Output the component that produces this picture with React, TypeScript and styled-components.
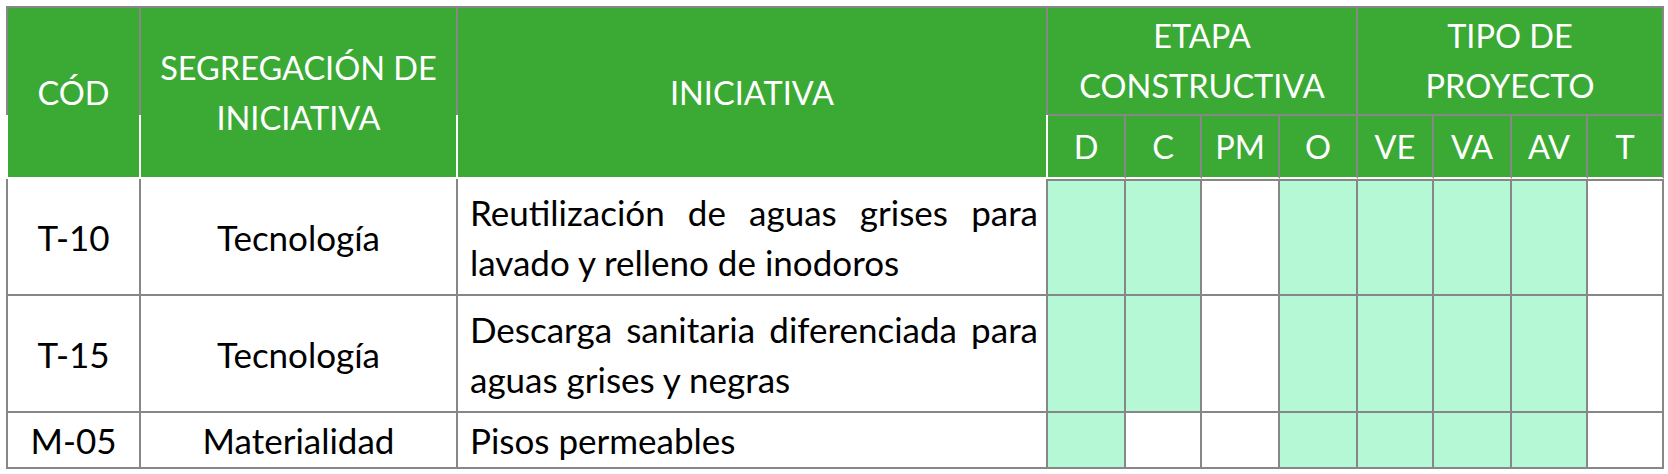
import React from "react";
import styled, { createGlobalStyle, css } from "styled-components";

const GREEN = "#3aaa35";
const FILL = "#b5f8d5";
const LINE = "#878787";

const GlobalStyle = createGlobalStyle`
  html, body { margin: 0; padding: 0; background: #ffffff; }
  body { font-family: Lato, "Liberation Sans", sans-serif; }
`;

const Page = styled.div`
  padding: 6px;
`;

const Sheet = styled.div`
  display: grid;
  grid-template-columns: 135px 317px 590px 78px 76px 78px 78px 76px 78px 76px 76px;
  grid-template-rows: 110px 63px 117px 117px 56px;
  width: max-content;
`;

const splitBorder = css`
  border-style: solid;
  border-image: linear-gradient(
      to bottom,
      ${LINE} 0,
      ${LINE} 109px,
      #ffffff 109px,
      #ffffff 100%
    )
    2;
`;

const HeadCell = styled.div<{
  $rows?: number;
  $cols?: number;
  $split?: boolean;
  $first?: boolean;
  $top?: boolean;
  $sub?: boolean;
}>`
  box-sizing: border-box;
  grid-row: span ${(p) => p.$rows ?? 1};
  grid-column: span ${(p) => p.$cols ?? 1};
  background: ${GREEN};
  color: #ffffff;
  font-size: 32.5px;
  line-height: 50px;
  display: flex;
  align-items: center;
  justify-content: center;
  text-align: center;
  white-space: nowrap;
  border-style: solid;
  border-color: ${LINE};
  border-width: ${(p) => (p.$top ? "2px" : "0")} 2px 2px ${(p) => (p.$first ? "2px" : "0")};
  ${(p) => p.$sub && css`border-bottom-color: #ffffff;`}
  ${(p) => p.$split && splitBorder}
`;

const Cell = styled.div<{ $fill?: boolean; $first?: boolean; $lead?: boolean; $align?: "left" | "center" }>`
  box-sizing: border-box;
  background: ${(p) => (p.$fill ? FILL : "#ffffff")};
  color: #000000;
  font-size: 35px;
  line-height: 50px;
  display: flex;
  flex-direction: column;
  justify-content: center;
  align-items: ${(p) => (p.$align === "left" ? "stretch" : "center")};
  padding: ${(p) => (p.$align === "left" ? "0 8px 0 12px" : "0")};
  white-space: nowrap;
  border-style: solid;
  border-color: ${LINE};
  border-width: 0 2px 2px ${(p) => (p.$first ? "2px" : "0")};
  ${(p) => p.$lead && css`box-shadow: inset 0 2px 0 ${LINE};`}
`;

const Line = styled.span<{ $justify?: boolean }>`
  display: block;
  white-space: nowrap;
  ${(p) =>
    p.$justify &&
    css`
      white-space: normal;
      text-align: justify;
      text-align-last: justify;
    `}
`;

type Row = {
  code: string;
  group: string;
  lines: string[];
  marks: boolean[];
};

const rows: Row[] = [
  {
    code: "T-10",
    group: "Tecnología",
    lines: ["Reutilización de aguas grises para", "lavado y relleno de inodoros"],
    marks: [true, true, false, true, true, true, true, false],
  },
  {
    code: "T-15",
    group: "Tecnología",
    lines: ["Descarga sanitaria diferenciada para", "aguas grises y negras"],
    marks: [true, true, false, true, true, true, true, false],
  },
  {
    code: "M-05",
    group: "Materialidad",
    lines: ["Pisos permeables"],
    marks: [true, false, false, true, true, true, true, false],
  },
];

const subHeads = ["D", "C", "PM", "O", "VE", "VA", "AV", "T"];

export default function App() {
  return (
    <>
      <GlobalStyle />
      <Page>
        <Sheet>
          <HeadCell $rows={2} $split $first $top>
            CÓD
          </HeadCell>
          <HeadCell $rows={2} $split $top>
            <span>
              SEGREGACIÓN DE
              <br />
              INICIATIVA
            </span>
          </HeadCell>
          <HeadCell $rows={2} $split $top>
            INICIATIVA
          </HeadCell>
          <HeadCell $cols={4} $top>
            <span>
              ETAPA
              <br />
              CONSTRUCTIVA
            </span>
          </HeadCell>
          <HeadCell $cols={4} $top>
            <span>
              TIPO DE
              <br />
              PROYECTO
            </span>
          </HeadCell>
          {subHeads.map((h) => (
            <HeadCell key={h} $sub>
              {h}
            </HeadCell>
          ))}
          {rows.map((r, ri) => (
            <React.Fragment key={r.code}>
              <Cell $first>{r.code}</Cell>
              <Cell>{r.group}</Cell>
              <Cell $align="left">
                {r.lines.map((l, li) => (
                  <Line key={li} $justify={li < r.lines.length - 1}>
                    {l}
                  </Line>
                ))}
              </Cell>
              {r.marks.map((m, mi) => (
                <Cell key={mi} $fill={m} $lead={ri === 0} />
              ))}
            </React.Fragment>
          ))}
        </Sheet>
      </Page>
    </>
  );
}
